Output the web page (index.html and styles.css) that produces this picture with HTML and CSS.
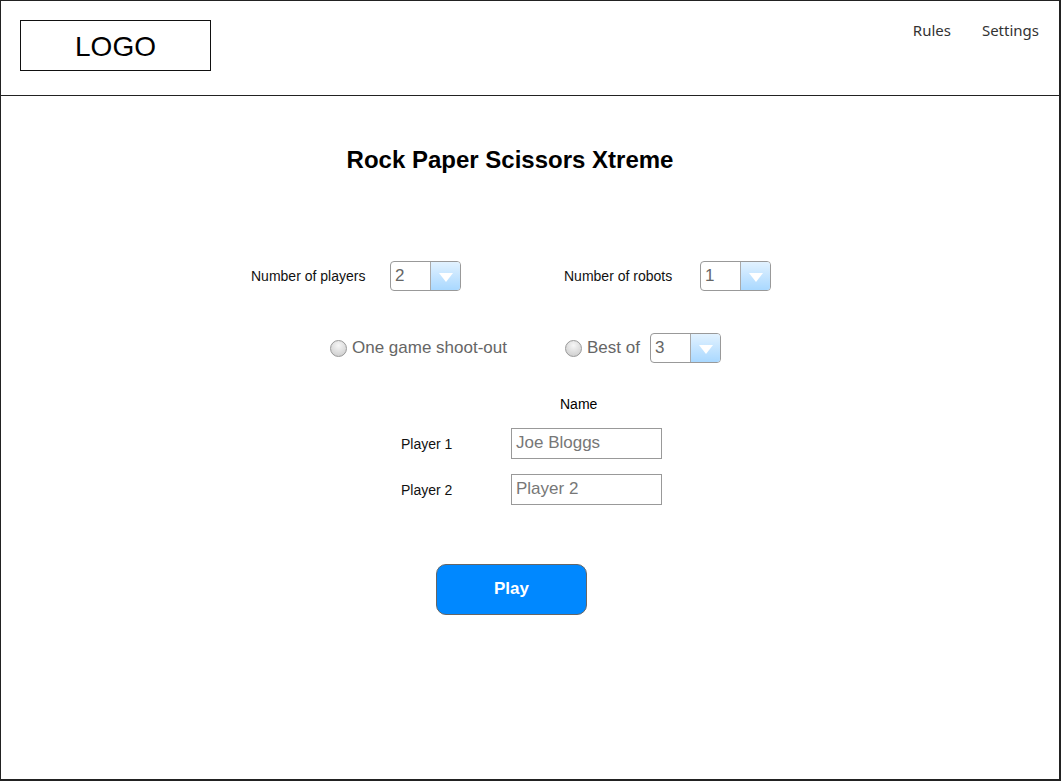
FILE: index.html
```html
<!DOCTYPE html>
<html>
<head>
<meta charset="utf-8">
<link rel="stylesheet" href="styles.css">
</head>
<body>
<div class="frame">
  <header class="header">
    <div class="logo">LOGO</div>
    <nav class="nav">
      <span class="nav-item">Rules</span>
      <span class="nav-item">Settings</span>
    </nav>
  </header>
  <main class="main">
    <h1 class="title">Rock Paper Scissors Xtreme</h1>
    <div class="row row-counts">
      <span class="label label-players">Number of players</span>
      <div class="select"><span class="select-value">2</span><span class="select-btn"><svg width="14" height="10" viewBox="0 0 14 10"><path d="M0 1 L14 1 L7 10 Z" fill="#fff"/></svg></span></div>
      <span class="label label-robots">Number of robots</span>
      <div class="select"><span class="select-value">1</span><span class="select-btn"><svg width="14" height="10" viewBox="0 0 14 10"><path d="M0 1 L14 1 L7 10 Z" fill="#fff"/></svg></span></div>
    </div>
    <div class="row row-mode">
      <span class="radio"></span>
      <span class="radio-text radio-text-one">One game shoot-out</span>
      <span class="radio"></span>
      <span class="radio-text radio-text-best">Best of</span>
      <div class="select"><span class="select-value">3</span><span class="select-btn"><svg width="14" height="10" viewBox="0 0 14 10"><path d="M0 1 L14 1 L7 10 Z" fill="#fff"/></svg></span></div>
    </div>
    <div class="names">
      <div class="name-head">Name</div>
      <div class="name-row">
        <span class="label player-label">Player 1</span>
        <div class="input">Joe Bloggs</div>
      </div>
      <div class="name-row">
        <span class="label player-label">Player 2</span>
        <div class="input">Player 2</div>
      </div>
    </div>
    <div class="play-wrap">
      <button class="play">Play</button>
    </div>
  </main>
</div>
</body>
</html>
```

FILE: styles.css
```css
* { box-sizing: border-box; }
html, body { margin: 0; padding: 0; background: #fff; }
body { font-family: "Liberation Sans", Arial, sans-serif; color: #000; }

.frame {
  width: 1061px;
  height: 781px;
  border: 1px solid #222;
  border-right-width: 2px;
  border-bottom-width: 2px;
  display: flex;
  flex-direction: column;
}

.header {
  height: 95px;
  border-bottom: 1px solid #222;
  display: flex;
  justify-content: space-between;
  align-items: flex-start;
  padding: 19px 20px 0 19px;
  flex: none;
}

.logo {
  width: 191px;
  height: 51px;
  border: 1px solid #111;
  font-size: 28px;
  display: flex;
  align-items: center;
  justify-content: center;
  padding-top: 2px;
}

.nav {
  display: flex;
  gap: 31px;
  padding-top: 0;
  font-family: "Noto Sans", "Open Sans", sans-serif;
  font-size: 15px;
  color: #333;
}

.main {
  flex: 1;
  display: flex;
  flex-direction: column;
}

.title {
  margin: 50px 0 0 0;
  font-size: 24px;
  font-weight: bold;
  text-align: center;
  padding-right: 40px;
  line-height: 28px;
}

.row {
  display: flex;
  align-items: center;
}

.label { font-size: 14px; color: #111; }

.row-counts { margin-top: 87px; padding-left: 250px; }
.label-players { width: 139px; }
.label-robots { margin-left: 103px; width: 136px; }

.select {
  width: 71px;
  height: 30px;
  border: 1px solid #999;
  border-radius: 4px;
  display: flex;
  overflow: hidden;
  background: #fff;
}
.select-value {
  flex: 1;
  font-size: 17px;
  color: #666;
  padding-left: 4px;
  line-height: 28px;
}
.select-btn {
  width: 30px;
  border-left: 1px solid #aaa;
  background: linear-gradient(#e2f2ff, #a9d8ff);
  display: flex;
  align-items: center;
  justify-content: center;
  padding-top: 1px;
}

.row-mode { margin-top: 42px; padding-left: 329px; }
.radio {
  width: 17px;
  height: 17px;
  border-radius: 50%;
  border: 1px solid #999;
  background: radial-gradient(circle at 50% 30%, #f6f6f6, #c8c8c8);
  flex: none;
}
.radio-text { font-size: 17px; color: #666; margin-left: 5px; }
.radio-text-one { width: 213px; }
.radio-text-best { width: 63px; }

.names {
  display: flex;
  flex-direction: column;
  padding-left: 400px;
}
.name-head {
  margin-top: 33px;
  padding-left: 159px;
  font-size: 14px;
  line-height: 16px;
}
.name-row {
  display: flex;
  align-items: center;
  margin-top: 16px;
}
.name-row + .name-row { margin-top: 15px; }
.player-label { width: 110px; }
.input {
  width: 151px;
  height: 31px;
  border: 1px solid #999;
  font-size: 17px;
  color: #777;
  padding-left: 4px;
  line-height: 28px;
}

.play-wrap {
  padding-left: 435px;
  margin-top: 59px;
}
.play {
  width: 151px;
  height: 51px;
  border: 1px solid #666;
  border-radius: 10px;
  background: #0088ff;
  color: #fff;
  font-family: "Liberation Sans", Arial, sans-serif;
  font-weight: bold;
  font-size: 17px;
  padding: 0;
  padding-bottom: 2px;
}
```
